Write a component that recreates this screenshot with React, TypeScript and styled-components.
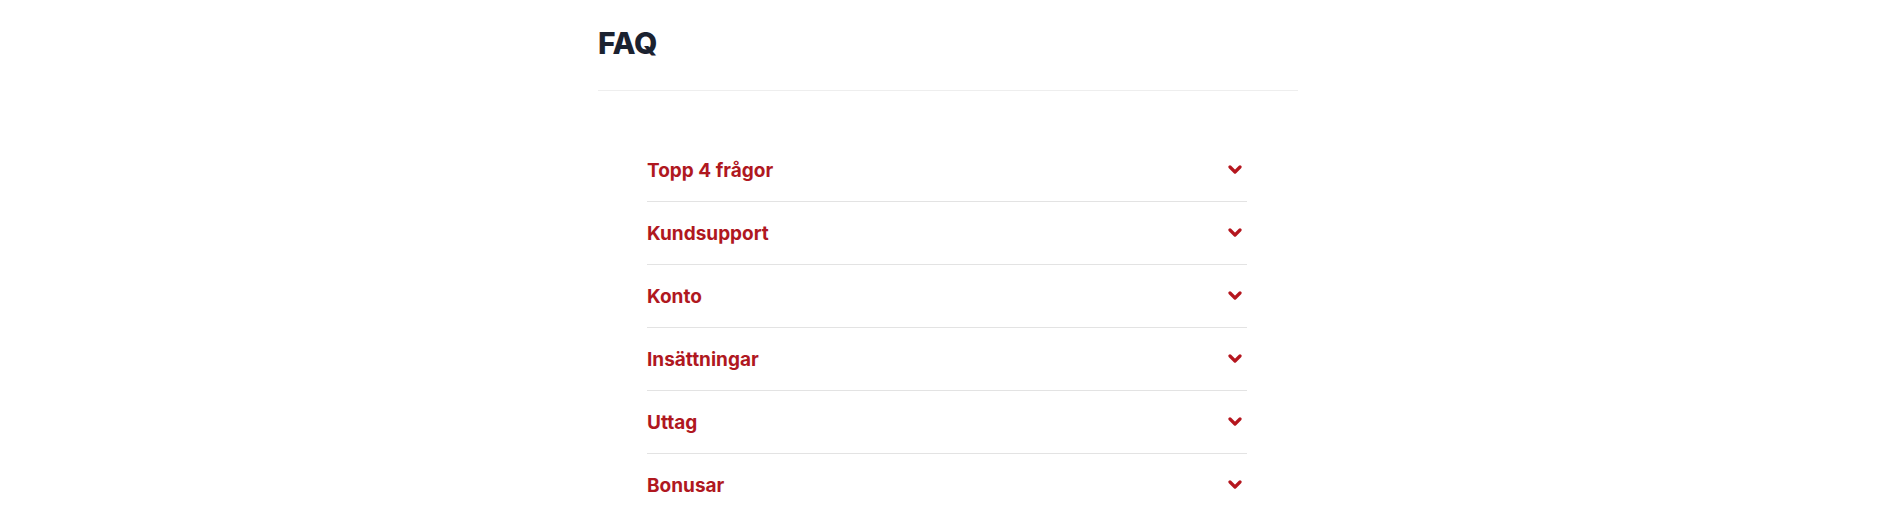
import React from 'react';
import styled, { createGlobalStyle } from 'styled-components';

const GlobalStyle = createGlobalStyle`
  body {
    margin: 0;
    background: #ffffff;
    font-family: Inter, "Noto Sans", sans-serif;
  }
`;

const sections = ['Topp 4 frågor', 'Kundsupport', 'Konto', 'Insättningar', 'Uttag', 'Bonusar'];

const Chevron = () => (
  <svg width="14" height="10" viewBox="0 0 14 10" aria-hidden>
    <polyline points="2,2 7,7 12,2" fill="none" stroke="#b5161e" strokeWidth="3.2" strokeLinecap="round" strokeLinejoin="round" />
  </svg>
);

const App = () => {
  return (
    <>
      <GlobalStyle />
      <S.Page>
        <S.Header>
          <S.Title>FAQ</S.Title>
        </S.Header>
        <S.List>
          {sections.map((label) => (
            <S.Row key={label}>
              <S.Label>{label}</S.Label>
              <S.Toggle>
                <Chevron />
              </S.Toggle>
            </S.Row>
          ))}
        </S.List>
      </S.Page>
    </>
  );
};

export default App;

const S = {
  Page: styled.div`
    width: 700px;
    margin: 0 auto;
    padding-top: 25px;
  `,
  Header: styled.div`
    padding-bottom: 29px;
    border-bottom: 1px solid #eeeeee;
  `,
  Title: styled.h1`
    margin: 0;
    font-size: 30px;
    line-height: 36px;
    font-weight: 800;
    color: #1b2230;
    letter-spacing: -0.3px;
  `,
  List: styled.div`
    width: 600px;
    margin: 48px 0 0 49px;
    display: flex;
    flex-direction: column;
  `,
  Row: styled.div`
    display: flex;
    align-items: center;
    justify-content: space-between;
    height: 62px;
    border-bottom: 1px solid #e3e3e3;
    cursor: pointer;
  `,
  Label: styled.span`
    font-size: 19px;
    font-weight: 700;
    color: #b0181f;
  `,
  Toggle: styled.span`
    display: flex;
    align-items: center;
    padding-right: 5px;
  `
};
